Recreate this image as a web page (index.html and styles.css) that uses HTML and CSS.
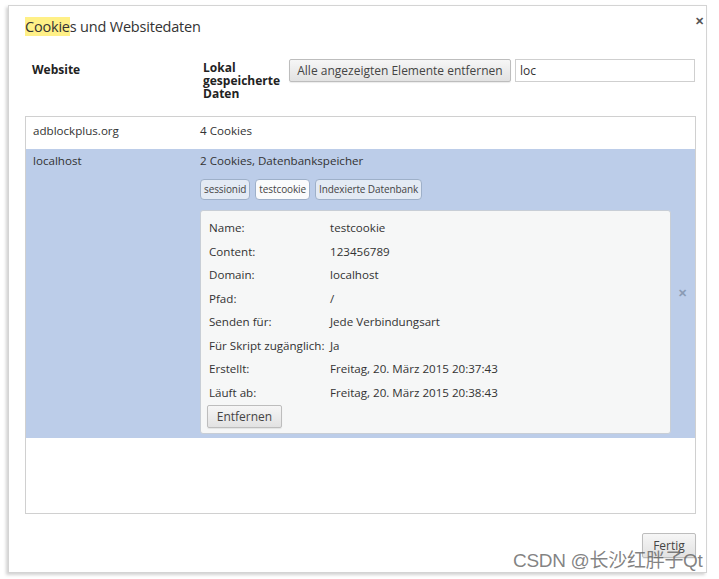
FILE: index.html
```html
<!DOCTYPE html>
<html lang="de">
<head>
<meta charset="utf-8">
<link rel="stylesheet" href="styles.css">
</head>
<body>
<div class="page">
  <div class="dialog">
    <div class="title-row">
      <h1 class="title"><span class="hl">Cookie</span>s und Websitedaten</h1>
      <span class="close">&#x2715;</span>
    </div>
    <div class="header">
      <div class="col-site">Website</div>
      <div class="col-data">Lokal gespeicherte Daten</div>
      <div class="tools">
        <button class="btn btn-all">Alle angezeigten Elemente entfernen</button>
        <input class="search" type="text" value="loc">
      </div>
    </div>
    <div class="list">
      <div class="row">
        <div class="site">adblockplus.org</div>
        <div class="data">4 Cookies</div>
      </div>
      <div class="row selected">
        <div class="site">localhost</div>
        <div class="data">
          <div class="summary">2 Cookies, Datenbankspeicher</div>
          <div class="chips">
            <span class="chip">sessionid</span>
            <span class="chip active">testcookie</span>
            <span class="chip">Indexierte Datenbank</span>
          </div>
          <div class="details">
            <div class="kv"><span class="k">Name:</span><span class="v">testcookie</span></div>
            <div class="kv"><span class="k">Content:</span><span class="v">123456789</span></div>
            <div class="kv"><span class="k">Domain:</span><span class="v">localhost</span></div>
            <div class="kv"><span class="k">Pfad:</span><span class="v">/</span></div>
            <div class="kv"><span class="k">Senden für:</span><span class="v">Jede Verbindungsart</span></div>
            <div class="kv"><span class="k">Für Skript zugänglich:</span><span class="v">Ja</span></div>
            <div class="kv"><span class="k">Erstellt:</span><span class="v">Freitag, 20. März 2015 20:37:43</span></div>
            <div class="kv"><span class="k">Läuft ab:</span><span class="v">Freitag, 20. März 2015 20:38:43</span></div>
            <button class="btn btn-remove">Entfernen</button>
          </div>
        </div>
        <div class="row-x">&#x2715;</div>
      </div>
    </div>
    <div class="footer">
      <button class="btn btn-done">Fertig</button>
    </div>
  </div>
  <div class="watermark">CSDN @长沙红胖子Qt</div>
</div>
</body>
</html>
```
FILE: styles.css
```css
* { box-sizing: border-box; }
html, body { margin: 0; padding: 0; background: #fff; }
body {
  width: 719px; height: 579px; overflow: hidden;
  font-family: "Open Sans", "Noto Sans", sans-serif;
  font-size: 11.6px; color: #333;
}
.page { position: relative; width: 719px; height: 579px; padding: 5px 12px 0 8px; }
.dialog {
  width: 699px; height: 568px;
  background: #fff;
  border: 1px solid #d4d4d4;
  box-shadow: -2px 2px 3px rgba(0,0,0,0.18);
  padding: 0 9px 0 16px;
  display: flex; flex-direction: column;
}
.title-row { display: flex; justify-content: space-between; align-items: flex-start; height: 49px; padding-top: 10px; }
.title { margin: 0; font-weight: normal; font-size: 14.5px; color: #333; line-height: 22px; letter-spacing: -0.2px; }
.hl { background: #fff087; }
.close { font-size: 11px; font-weight: bold; color: #555; margin-top: -3px; margin-right: -7px; }
.header { display: flex; align-items: flex-start; height: 56px; padding-left: 7px; }
.col-site { width: 171px; font-weight: bold; padding-top: 6px; color: #222; font-size: 12px; }
.col-data { width: 86px; font-weight: bold; line-height: 13px; padding-top: 6px; color: #222; font-size: 12px; }
.tools { display: flex; gap: 4px; margin-top: 4px; }
.btn {
  font-family: inherit; font-size: 12px; color: #444;
  background: linear-gradient(#f6f6f6, #e2e2e2);
  border: 1px solid #bdbdbd; border-radius: 2px;
  box-shadow: 0 1px 1px rgba(0,0,0,0.08);
  padding: 0 10px; height: 23px; line-height: 20px;
}
.btn-all { width: 222px; padding: 0; }
.search {
  width: 180px; height: 23px; border: 1px solid #cfcfcf; background: #fff;
  font-family: inherit; font-size: 12px; color: #333; padding: 0 4px; outline: none;
}
.list { width: 671px; height: 398px; border: 1px solid #d0d0d0; margin-top: 5px; }
.row { display: flex; padding: 6px 0 0 7px; }
.row:first-child { height: 32px; }
.site { width: 167px; }
.data { flex: 1; }
.selected { background: #bccde9; height: 289px; padding-top: 4px; position: relative; }
.summary { height: 18px; }
.chips { display: flex; gap: 5px; margin-top: 8px; }
.chip {
  font-size: 10px; color: #444; background: #e3eaf4;
  border: 1px solid #9eb0c9; border-radius: 4px;
  height: 21px; line-height: 19px; padding: 0 3px; letter-spacing: -0.1px;
}
.chip.active { background: #fafbfc; }
.details {
  width: 471px; margin-top: 10px;
  background: #f6f7f7; border: 1px solid #c8ced6; border-radius: 3px;
  padding: 5px 7px 5px 8px;
}
.kv { display: flex; height: 23.5px; line-height: 23px; }
.k { width: 121px; white-space: nowrap; }
.btn-remove { margin-top: 1px; margin-left: -2px; width: 75px; padding: 0; }
.row-x { width: 19px; margin-right: -2px; font-size: 11px; font-weight: bold; color: #8a9bb4; align-self: center; margin-top: -6px; }
.footer { display: flex; justify-content: flex-end; padding-top: 19px; padding-right: 1px; }
.btn-done { width: 54px; padding: 0; height: 25px; }
.watermark {
  position: absolute; left: 513px; top: 545px;
  font-family: "Liberation Sans", "Noto Sans CJK SC", sans-serif;
  font-size: 19px; color: rgba(90,90,90,0.75); white-space: nowrap; letter-spacing: -0.3px;
}
```
